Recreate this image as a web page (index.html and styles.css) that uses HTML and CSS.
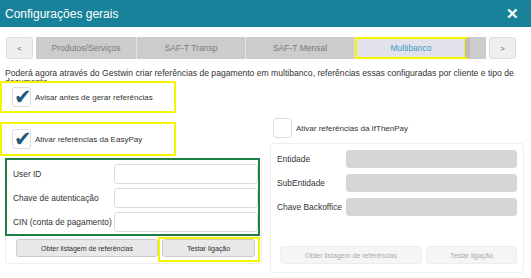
FILE: index.html
```html
<!DOCTYPE html>
<html lang="pt">
<head>
  <meta charset="UTF-8">
  <title>Configurações gerais</title>
  <link rel="stylesheet" href="styles.css">
</head>
<body>
  <div class="topo">
    <span class="titulo">Configurações gerais</span>
    <span class="fechar">&#10005;</span>
  </div>

  <div class="abas">
    <button class="seta">&lt;</button>
    <div class="faixa">
      <div class="aba">Produtos/Serviços</div>
      <div class="aba">SAF-T Transp</div>
      <div class="aba">SAF-T Mensal</div>
      <div class="aba ativa">Multibanco</div>
      <div class="resto"></div>
    </div>
    <button class="seta">&gt;</button>
  </div>

  <p class="intro">Poderá agora através do Gestwin criar referências de pagamento em multibanco, referências essas configuradas por cliente e tipo de documento.</p>

  <div class="colunas">
    <div class="esquerda">
      <div class="opcao amarelo primeiro">
        <span class="caixa"><span class="visto">&#10004;</span></span>
        <span>Avisar antes de gerar referências</span>
      </div>
      <div class="opcao amarelo segundo">
        <span class="caixa"><span class="visto">&#10004;</span></span>
        <span>Ativar referências da EasyPay</span>
      </div>
      <div class="painel">
        <div class="campos verde">
          <div class="linha"><label>User ID</label><input type="text"></div>
          <div class="linha"><label>Chave de autenticação</label><input type="text"></div>
          <div class="linha"><label>CIN (conta de pagamento)</label><input type="text"></div>
        </div>
        <div class="botoes">
          <button class="btn largo">Obter listagem de referências</button>
          <span class="realce"><button class="btn">Testar ligação</button></span>
        </div>
      </div>
    </div>

    <div class="direita">
      <div class="opcao">
        <span class="caixa"></span>
        <span>Ativar referências da IfThenPay</span>
      </div>
      <div class="painel inativo">
        <div class="campos">
          <div class="linha"><label>Entidade</label><input type="text" disabled></div>
          <div class="linha"><label>SubEntidade</label><input type="text" disabled></div>
          <div class="linha"><label>Chave Backoffice</label><input type="text" disabled></div>
        </div>
        <div class="botoes">
          <button class="btn largo" disabled>Obter listagem de referências</button>
          <button class="btn" disabled>Testar ligação</button>
        </div>
      </div>
    </div>
  </div>
</body>
</html>
```

FILE: styles.css
```css
body {
  margin: 0;
  font-family: "Liberation Sans", Arial, sans-serif;
  background-color: #fff;
  color: #333;
  width: 531px;
  height: 278px;
  overflow: hidden;
}
.topo {
  height: 27px;
  background-color: #17829a;
  color: #fff;
  display: flex;
  align-items: center;
  justify-content: space-between;
  padding: 0 12px 0 5px;
}
.titulo {
  font-size: 12px;
}
.fechar {
  font-size: 15px;
  font-weight: bold;
}
.abas {
  display: flex;
  align-items: center;
  margin: 10px 0 0 6px;
  width: 510px;
}
.seta {
  width: 27px;
  height: 22px;
  background-color: #eee;
  border: 1px solid #ddd;
  border-radius: 3px;
  font-size: 7px;
  color: #555;
  padding: 0;
}
.faixa {
  flex: 1;
  display: flex;
  height: 22px;
  margin: 0 3px;
  background-color: #ccc;
}
.aba {
  width: 108px;
  border-right: 1px solid #e2e2e2;
  display: flex;
  align-items: center;
  justify-content: center;
  font-size: 8.5px;
  color: #7a7a7a;
}
.aba:first-child {
  width: 100px;
}
.aba.ativa {
  background-color: #e2e2ec;
  color: #3b9cbf;
  border: 2px solid #f5f500;
  border-right: 5px solid #bbb;
  box-shadow: inset -1px 0 0 #f5f500;
}
.resto {
  flex: 1;
}
.intro {
  font-size: 8.6px;
  line-height: 9px;
  margin: 10px 0 0 5px;
  width: 515px;
  height: 12px;
}
.colunas {
  display: flex;
}
.esquerda {
  width: 262px;
}
.direita {
  width: 254px;
  margin-left: 8px;
  padding-top: 37px;
}
.opcao {
  display: flex;
  align-items: center;
  gap: 4px;
  font-size: 8px;
  color: #333;
  padding-left: 10px;
}
.amarelo {
  position: relative;
  width: 162px;
  height: 28px;
  border: 2px solid #f5f500;
  background-color: #fff;
}
.primeiro {
  margin-bottom: 9px;
}
.segundo {
  height: 30px;
  margin-bottom: 2px;
}
.caixa {
  width: 17px;
  height: 18px;
  border: 1px solid #ddd;
  border-radius: 3px;
  background-color: #fff;
  display: flex;
  align-items: center;
  justify-content: center;
}
.visto {
  color: #1d5b7a;
  font-size: 21px;
  line-height: 18px;
  margin-left: 2px;
}
.direita .opcao {
  padding-left: 3px;
  height: 20px;
}
.painel {
  box-sizing: border-box;
  width: 257px;
  height: 106px;
  border: 1px solid #eee;
  border-radius: 3px;
  margin-left: 5px;
}
.direita .painel {
  width: 254px;
  height: 130px;
  margin: 5px 0 0 0;
  padding: 3px 6px 0 6px;
}
.campos {
  padding: 2px 0 0 6px;
}
.verde {
  position: relative;
  box-sizing: border-box;
  width: 255px;
  height: 78px;
  border: 2px solid #1f7f45;
  margin: -1px 0 0 -1px;
}
.linha {
  display: flex;
  align-items: center;
  height: 24px;
}
.linha label {
  flex: 0 0 101px;
  font-size: 8.4px;
  color: #333;
  white-space: nowrap;
}
.direita .linha label {
  flex: 0 0 69px;
}
input {
  flex: 1;
  width: 0;
  min-width: 0;
  height: 20px;
  box-sizing: border-box;
  border: 1px solid #ddd;
  border-radius: 3px;
  background-color: #fff;
}
input:disabled {
  background-color: #d6d6d6;
  border-color: #d6d6d6;
  height: 18px;
}
.direita .campos {
  padding: 0;
}
.botoes {
  display: flex;
  align-items: flex-start;
  gap: 6px;
  padding: 3px 0 0 10px;
}
.direita .botoes {
  padding: 27px 0 0 3px;
  gap: 4px;
}
.btn {
  height: 18px;
  width: 93px;
  background-color: #e8e8e8;
  border: 1px solid #ccc;
  border-radius: 3px;
  font-family: "Liberation Sans", Arial, sans-serif;
  font-size: 7px;
  color: #333;
  padding: 0;
}
.btn.largo {
  width: 142px;
}
.realce {
  display: flex;
  border: 2px solid #f5f500;
  padding: 0 3px 3px 2px;
  margin: -2px 0 0 -6px;
}
.btn:disabled {
  background-color: #f5f5f5;
  border-color: #eee;
  color: #aaa;
}
.direita .btn {
  width: 91px;
}
.direita .btn.largo {
  width: 142px;
}
```
